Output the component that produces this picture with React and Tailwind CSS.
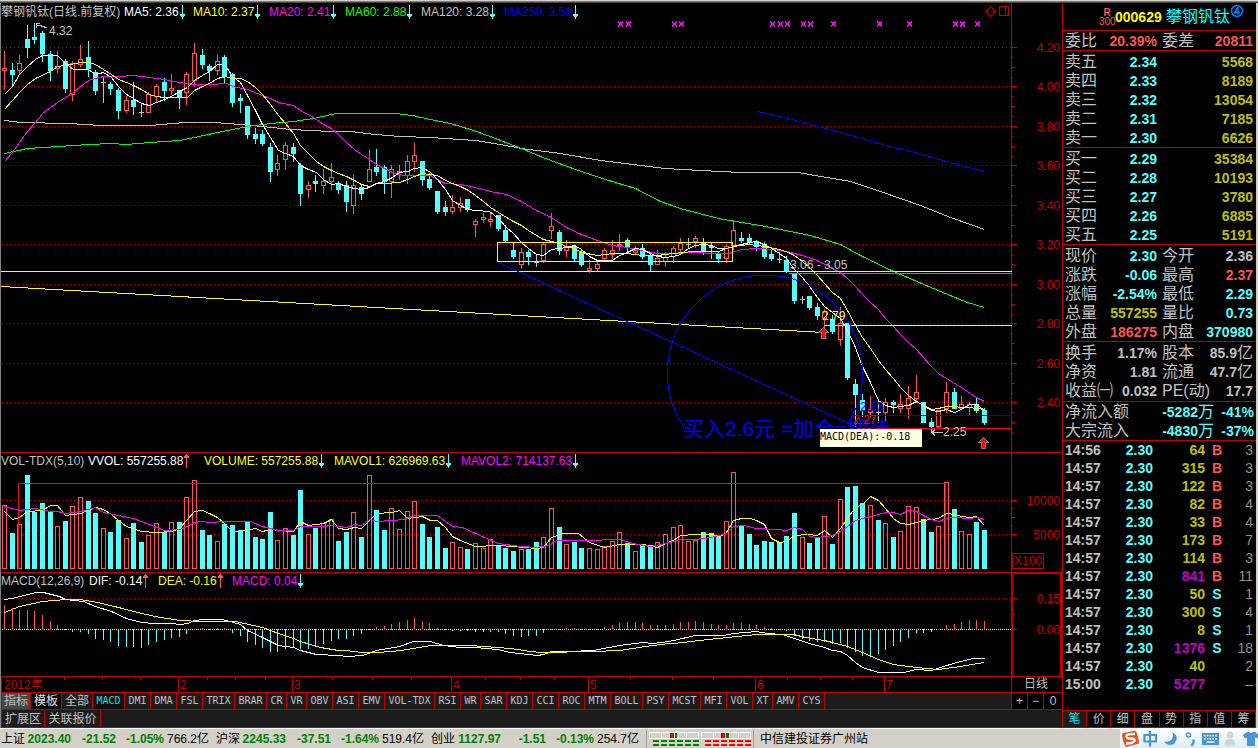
import React, { useState } from 'react'

/* daily candles, in chart units: [kind, high, bodyTop, bodyBottom, low]
   u = up, d = down, F / f = doji on rising / falling volume */
const CANDLES = [
  ['u', 51, 68, 71, 89], ['d', 63, 70, 75, 86], ['u', 55, 63, 71, 75], ['d', 25, 39, 48, 58], ['d', 23, 37, 40, 44],
  ['d', 31, 33, 54, 62], ['d', 51, 54, 71, 81], ['u', 51, 66, 69, 73], ['d', 59, 61, 89, 93], ['u', 61, 63, 95, 101],
  ['u', 45, 59, 65, 67], ['d', 41, 57, 69, 77], ['d', 70, 72, 91, 95], ['F', 77, 82, 83, 103], ['d', 82, 84, 89, 95],
  ['d', 88, 90, 111, 119], ['u', 96, 100, 111, 113], ['d', 82, 100, 107, 115], ['f', 103, 112, 113, 117], ['u', 92, 94, 113, 113],
  ['u', 84, 86, 97, 103], ['d', 78, 82, 91, 101], ['u', 74, 88, 91, 95], ['d', 90, 90, 98, 109], ['u', 72, 74, 93, 105],
  ['u', 43, 53, 81, 87], ['d', 49, 55, 65, 69], ['d', 64, 66, 71, 81], ['u', 55, 61, 71, 75], ['d', 55, 57, 77, 83],
  ['d', 73, 74, 103, 107], ['d', 94, 98, 101, 113], ['d', 106, 106, 135, 139], ['d', 128, 134, 139, 144], ['d', 130, 134, 144, 146],
  ['d', 143, 147, 172, 182], ['u', 155, 163, 170, 176], ['u', 142, 145, 160, 170], ['d', 143, 147, 154, 162], ['d', 163, 165, 194, 206],
  ['u', 181, 185, 190, 198], ['d', 175, 181, 184, 192], ['u', 169, 181, 186, 194], ['u', 163, 177, 182, 190], ['d', 181, 183, 190, 194],
  ['d', 181, 185, 202, 212], ['u', 175, 185, 206, 214], ['d', 185, 187, 194, 200], ['u', 149, 169, 182, 182], ['d', 149, 167, 172, 176],
  ['d', 165, 167, 182, 194], ['u', 165, 169, 182, 198], ['u', 165, 171, 173, 180], ['u', 155, 161, 176, 184], ['u', 143, 155, 162, 172],
  ['d', 161, 161, 180, 186], ['d', 173, 179, 188, 190], ['d', 191, 191, 212, 214], ['d', 201, 207, 212, 216], ['u', 195, 207, 212, 214],
  ['u', 197, 203, 208, 212], ['d', 199, 199, 210, 212], ['u', 219, 221, 225, 237], ['u', 213, 217, 220, 223], ['u', 213, 219, 222, 227],
  ['d', 215, 215, 229, 231], ['d', 225, 230, 241, 242], ['d', 243, 250, 257, 259], ['u', 248, 252, 265, 269], ['d', 250, 252, 257, 265],
  ['f', 254, 262, 263, 267], ['u', 243, 244, 261, 263], ['u', 213, 226, 231, 239], ['d', 230, 232, 251, 255], ['u', 240, 246, 251, 257],
  ['d', 245, 246, 259, 261], ['d', 250, 252, 265, 267], ['u', 260, 268, 271, 273], ['u', 262, 264, 269, 271], ['u', 248, 250, 259, 261],
  ['u', 240, 250, 255, 259], ['u', 234, 244, 246, 251], ['d', 238, 240, 248, 253], ['u', 246, 250, 253, 255], ['d', 244, 248, 257, 259],
  ['d', 254, 255, 265, 271], ['u', 250, 258, 265, 265], ['u', 252, 257, 262, 267], ['u', 246, 248, 257, 263], ['u', 238, 243, 250, 252],
  ['F', 238, 244, 245, 248], ['u', 236, 238, 242, 248], ['d', 238, 242, 251, 255], ['d', 243, 246, 248, 259], ['d', 251, 254, 259, 263],
  ['u', 244, 246, 259, 263], ['u', 220, 230, 246, 250], ['d', 232, 238, 241, 243], ['d', 234, 238, 243, 245], ['d', 240, 241, 247, 251],
  ['d', 242, 244, 257, 259], ['d', 250, 254, 259, 261], ['f', 252, 259, 260, 263], ['d', 256, 260, 272, 273], ['d', 274, 274, 301, 304],
  ['F', 296, 299, 300, 304], ['d', 296, 296, 308, 310], ['d', 303, 307, 316, 320], ['u', 309, 311, 319, 330], ['d', 315, 319, 332, 334],
  ['u', 307, 323, 340, 346], ['d', 323, 323, 378, 380], ['d', 379, 384, 395, 427], ['d', 394, 400, 411, 417], ['u', 396, 409, 413, 417],
  ['f', 400, 412, 413, 423], ['u', 398, 402, 413, 421], ['d', 400, 402, 405, 413], ['u', 394, 404, 409, 413], ['u', 386, 398, 409, 419],
  ['u', 375, 392, 399, 403], ['d', 402, 402, 423, 423], ['d', 418, 422, 427, 433], ['u', 410, 410, 427, 429], ['u', 382, 392, 409, 413],
  ['d', 388, 392, 409, 409], ['u', 396, 404, 409, 410], ['u', 402, 404, 408, 415], ['d', 398, 404, 411, 413], ['d', 408, 410, 423, 425],
]

/* top of each volume bar */
const VOLUME = [
  505, 533, 524, 475, 512, 503, 511, 526, 521, 506, 497, 501, 513, 528, 532, 520, 538, 523, 542, 535,
  523, 532, 522, 522, 497, 480, 530, 535, 541, 524, 525, 530, 522, 537, 539, 512, 540, 528, 535, 490,
  534, 528, 523, 519, 541, 532, 512, 537, 475, 510, 530, 508, 529, 511, 501, 524, 537, 527, 548, 542,
  547, 549, 543, 548, 539, 545, 548, 551, 549, 549, 542, 537, 508, 527, 544, 542, 548, 548, 549, 546,
  541, 532, 543, 551, 545, 545, 542, 534, 527, 525, 541, 540, 532, 533, 535, 521, 472, 526, 534, 545,
  541, 542, 542, 536, 513, 537, 543, 538, 516, 544, 499, 487, 486, 503, 505, 520, 523, 537, 531, 506,
  507, 519, 532, 526, 482, 509, 531, 534, 522, 530,
]

/* end of each MACD stick, the zero line is at 629 */
const MACD = [
  605, 608, 610, 610, 611, 615, 621, 625, 630, 632, 632, 634, 639, 640, 642, 646, 647, 647, 648, 645,
  642, 640, 638, 637, 634, 629, 628, 629, 628, 628, 633, 636, 642, 645, 648, 652, 652, 649, 648, 649,
  649, 647, 644, 641, 639, 639, 636, 634, 629, 627, 626, 624, 622, 620, 618, 621, 623, 628, 630, 631,
  631, 631, 632, 632, 632, 632, 634, 636, 637, 636, 636, 633, 629, 629, 628, 628, 629, 629, 629, 627,
  625, 623, 622, 622, 623, 625, 625, 625, 624, 622, 622, 621, 622, 624, 625, 625, 623, 623, 624, 625,
  627, 628, 629, 631, 636, 639, 641, 642, 642, 644, 643, 648, 652, 656, 656, 654, 650, 646, 642, 638,
  633, 633, 632, 629, 625, 624, 622, 620, 620, 621,
]

const PRICE_LINES = [
  { color: '#c0c0c0', points: '4,120 20,122 68,123 100,125 150,125 184,122 214,122 240,124 262,126 290,129 331,131 350,131 375,134 400,136 430,137 475,140 500,144 521,148 560,153 600,160 640,165 665,168 700,170 740,172 798,172 820,176 850,181 880,191 920,205 950,217 984,229' },
  { color: '#0000ff', points: '757,111 780,116 810,124 840,132 862,138 885,145 915,152 957,164 984,171' },
  { color: '#00ff00', points: '4,153 27,148 58,146 88,144 111,143 126,144 149,142 179,140 194,137 217,132 247,126 270,123 293,121 313,118 331,114 337,113 395,113 412,115 430,119 450,123 470,129 490,136 513,145 521,148 545,158 575,169 605,179 635,188 660,201 680,208 718,218 735,221 760,225 785,230 810,235 840,244 860,255 893,271 940,291 967,302 984,307' },
  { color: '#ff00ff', points: '4,161 12,152 19,142 27,131 35,122 42,113 50,107 57,102 65,97 73,92 80,86 88,80 95,78 103,76 118,76 133,75 149,77 164,79 179,82 194,84 209,84 227,83 232,86 247,89 262,95 270,98 278,102 293,105 300,110 313,117 323,124 331,128 338,134 346,142 354,149 361,154 369,159 376,164 384,168 392,172 403,175 430,175 437,179 445,183 460,184 475,187 490,191 506,194 521,201 536,210 551,217 566,227 581,234 597,240 612,245 627,247 642,250 657,253 670,253 693,252 718,253 728,253 741,249 757,248 773,249 786,251 802,255 817,260 832,268 840,272 847,278 855,286 862,294 870,302 878,309 885,318 893,326 900,334 908,342 916,349 923,357 931,366 938,373 946,378 961,387 976,397 984,401' },
  { color: '#ffff00', points: '4,109 12,100 19,92 27,84 35,78 50,71 57,66 65,65 80,62 88,62 95,64 103,69 111,74 118,79 126,82 133,85 141,89 149,94 156,96 164,97 179,97 187,97 194,90 202,86 209,83 217,78 225,76 232,78 240,78 247,81 255,87 262,94 270,104 278,115 285,123 293,133 300,145 308,153 316,161 323,166 331,170 338,173 346,176 354,180 361,184 369,186 376,183 384,183 399,182 407,179 414,176 422,173 437,175 445,180 452,183 460,186 468,190 475,195 483,201 490,207 498,212 506,217 513,221 521,225 528,230 536,235 543,239 551,241 559,243 566,246 574,248 581,252 597,255 612,253 627,253 642,255 657,255 673,253 693,251 718,251 726,248 733,246 749,244 764,246 779,249 788,252 794,255 802,261 809,267 817,275 824,283 832,292 840,298 847,310 855,325 862,337 870,348 878,360 885,369 893,378 900,387 908,395 916,401 923,405 931,409 938,408 946,406 969,407 984,409' },
  { color: '#ffffff', points: '4,94 12,86 19,74 27,66 35,59 42,55 57,55 65,63 73,69 88,69 95,74 103,72 111,77 118,86 126,94 133,98 141,103 149,105 156,102 164,99 171,96 179,91 187,87 194,80 202,75 209,71 217,64 225,65 232,76 240,82 247,95 255,110 262,124 270,137 278,150 285,153 293,156 300,165 308,169 316,172 323,179 331,184 338,183 346,186 354,188 361,189 369,187 376,183 384,181 392,177 399,172 407,171 414,168 422,167 430,172 437,179 445,189 452,200 460,205 468,209 475,210 489,211 498,218 506,227 513,233 521,242 528,248 536,254 543,255 551,249 566,247 574,245 581,249 589,256 597,260 612,260 619,255 627,252 635,248 642,249 650,253 657,256 665,257 673,256 680,254 688,248 695,245 703,244 711,245 718,248 726,248 733,246 741,244 749,242 756,241 764,244 771,248 779,253 786,258 794,269 802,277 809,286 817,297 824,306 832,312 840,318 847,330 855,347 862,366 870,382 878,400 885,405 893,407 900,406 908,405 916,401 923,405 931,410 938,411 946,409 954,412 961,409 969,404 976,404 984,410' },
]

const VOLUME_LINES = [
  { color: '#ffff00', points: '4,511 12,519 19,517 27,511 42,510 50,505 57,505 65,515 80,513 95,507 103,509 111,514 118,520 126,526 141,531 156,532 171,531 179,528 187,519 194,511 202,510 209,513 217,517 225,524 232,531 240,531 255,528 262,531 270,529 278,530 293,531 300,521 308,525 323,523 331,519 338,528 346,529 354,527 361,528 369,520 376,513 392,512 399,510 407,518 422,516 430,520 437,520 445,527 452,536 460,540 475,546 497,545 513,546 536,548 543,547 551,537 563,533 578,533 589,542 604,547 619,544 643,544 657,547 665,543 673,540 680,535 695,534 711,534 720,536 726,532 733,520 741,518 750,518 756,520 764,524 771,538 779,542 786,541 794,535 807,534 817,535 824,530 832,537 840,528 847,518 855,507 862,504 870,496 878,500 885,508 893,518 900,523 908,524 916,522 923,520 938,518 946,513 954,514 961,516 969,517 976,516 984,525' },
  { color: '#ff00ff', points: '4,506 19,510 27,509 35,508 50,511 57,511 65,513 80,511 95,507 103,512 118,515 133,518 149,524 164,530 179,529 187,526 194,522 202,521 209,522 225,521 250,521 262,526 278,530 293,530 300,526 323,526 331,525 346,527 354,524 361,525 369,519 376,521 392,520 403,519 414,515 437,515 445,521 452,526 462,527 475,533 498,543 520,546 536,547 548,545 556,540 584,540 620,539 632,543 650,546 665,543 680,539 695,539 711,537 726,533 733,526 743,525 756,528 776,529 786,530 794,527 802,529 809,536 817,537 832,535 840,531 847,526 855,520 862,518 870,516 885,512 893,512 900,514 908,510 916,511 923,515 931,519 938,521 946,518 954,517 969,518 976,517 984,519' },
]

const MACD_LINES = [
  { color: '#ffffff', points: '4,599 12,598 35,592 43,592 59,596 65,599 83,601 95,606 111,611 126,618 141,622 153,623 170,623 180,624 187,623 194,620 203,619 222,619 233,622 240,624 247,630 262,637 278,645 293,647 300,650 316,654 338,655 347,656 362,655 376,650 399,646 413,641 430,641 443,645 460,647 475,647 497,649 510,652 537,655 543,654 551,651 568,651 593,650 619,645 642,642 653,643 668,641 673,640 695,635 723,635 733,633 756,631 767,633 782,634 794,638 809,643 824,647 832,650 840,651 847,655 855,662 862,667 878,672 903,672 916,669 931,670 943,666 960,661 973,658 984,658' },
  { color: '#ffff00', points: '4,612 19,606 42,601 65,599 80,599 97,602 118,607 141,613 160,617 180,620 200,621 235,621 262,627 278,633 293,638 300,641 320,647 338,650 346,650 361,652 376,652 392,651 407,649 430,645 470,645 497,647 510,648 530,651 540,652 593,651 619,650 645,646 668,643 673,643 708,639 727,637 756,634 793,634 805,637 824,640 832,642 847,646 862,652 878,659 893,664 916,667 938,669 960,666 984,662' },
]

const PRICE_AXIS = [
  ['4.20', 47], ['4.00', 86], ['3.80', 126], ['3.60', 165], ['3.40', 205],
  ['3.20', 244], ['3.00', 284], ['2.80', 323], ['2.60', 363], ['2.40', 402],
]

const MARKS = [
  [620, 1], [628, 1], [674, 0], [681, 0], [772, 0], [780, 0], [787, 0], [803, 0],
  [810, 0], [833, 1], [879, 1], [909, 1], [955, 1], [962, 1], [977, 0],
]

const MONTHS = [['2', 178], ['3', 292], ['4', 451], ['5', 588], ['6', 755], ['7', 884]]
const WEEKS = [64, 102, 140, 207, 235, 265, 332, 372, 411, 485, 520, 554, 630, 672, 713, 787, 820, 852]

const INDICATORS = [
  'MACD', 'DMI', 'DMA', 'FSL', 'TRIX', 'BRAR', 'CR', 'VR', 'OBV', 'ASI', 'EMV', 'VOL-TDX', 'RSI', 'WR', 'SAR',
  'KDJ', 'CCI', 'ROC', 'MTM', 'BOLL', 'PSY', 'MCST', 'MFI', 'VOL', 'XT', 'AMV', 'CYS',
]
const TAB_WIDTH = { 2: 'w-5', 3: 'w-[26px]', 4: 'w-8', 7: 'w-[50px]' }

const ASKS = [['卖五', '2.34', '5568'], ['卖四', '2.33', '8189'], ['卖三', '2.32', '13054'], ['卖二', '2.31', '7185'], ['卖一', '2.30', '6626']]
const BIDS = [['买一', '2.29', '35384'], ['买二', '2.28', '10193'], ['买三', '2.27', '3780'], ['买四', '2.26', '6885'], ['买五', '2.25', '5191']]

const CYAN = 'text-[#54ffff]'
const RED = 'text-[#ff5454]'
const GREY = 'text-[#c0c0c0]'
const OLIVE = 'text-[#c0c000]'

/* label, value, value color, label, value, value color */
const QUOTE = [
  ['现价', '2.30', CYAN, '今开', '2.36', GREY],
  ['涨跌', '-0.06', CYAN, '最高', '2.37', RED],
  ['涨幅', '-2.54%', CYAN, '最低', '2.29', CYAN],
  ['总量', '557255', OLIVE, '量比', '0.73', CYAN],
  ['外盘', '186275', RED, '内盘', '370980', CYAN],
]
const FUNDAMENTALS = [
  ['换手', '1.17%', GREY, '股本', '85.9亿', GREY],
  ['净资', '1.81', GREY, '流通', '47.7亿', GREY],
  ['收益㈠', '0.032', GREY, 'PE(动)', '17.7', GREY],
]
const FLOWS = [['净流入额', '-5282万', '-41%'], ['大宗流入', '-4830万', '-37%']]

const TICKS = [
  ['14:56', '64', 'B', '3'], ['14:57', '315', 'B', '3'], ['14:57', '122', 'B', '3'], ['14:57', '82', 'B', '4'],
  ['14:57', '33', 'B', '4'], ['14:57', '173', 'B', '7'], ['14:57', '114', 'B', '3'], ['14:57', '841', 'B', '11'],
  ['14:57', '50', 'S', '1'], ['14:57', '300', 'S', '4'], ['14:57', '8', 'S', '1'], ['14:57', '1376', 'S', '18'],
  ['14:57', '40', '', '2'], ['15:00', '5277', '', '–'],
]

const INDEXES = [
  ['上证', '2023.40', '-21.52', '-1.05%', '766.2亿'],
  ['沪深', '2245.33', '-37.51', '-1.64%', '519.4亿'],
  ['创业', '1127.97', '-1.51', '-0.13%', '254.7亿'],
]

const candleX = (i) => Math.round(4 + i * 7.597)

function Trend({ up }) {
  return (
    <svg width="7" height="14" viewBox="0 0 7 14" className="shrink-0" shapeRendering="crispEdges">
      {up
        ? <path d="M3 0h1v1h1v1h1v2H4v10H3V4H1V2h1V1h1z" fill="#ff5454" />
        : <path d="M3 0h1v9h2v2H5v1H4v2H3v-2H2v-1H1V9h2z" fill="#54ffff" />}
    </svg>
  )
}

function PanelHeader({ items }) {
  return (
    <div className="absolute left-0 top-0 flex h-[17px] items-center whitespace-nowrap text-xs leading-4">
      {items.map(([text, style, dir]) => (
        <div key={text} className={`flex shrink-0 items-center ${style}`}>
          <span>{text}</span>
          {dir && <Trend up={dir === 'up'} />}
        </div>
      ))}
    </div>
  )
}

function Lines({ lines }) {
  return (
    <g fill="none" transform="translate(.5 .5)">
      {lines.map(l => <polyline key={l.color} points={l.points} stroke={l.color} />)}
    </g>
  )
}

function GridLine({ y }) {
  return <line x1="2" x2="1011" y1={y + 0.5} y2={y + 0.5} stroke="#c00000" strokeDasharray="1 3" />
}

function AxisText({ y, children }) {
  return <text x="1060" y={y + 5} textAnchor="end" fontSize="12" fill="#c00000">{children}</text>
}

function Candle({ i, data }) {
  const [kind, hi, top, bot, lo] = data
  const x = candleX(i)
  if (kind === 'f' || kind === 'F') {
    return (
      <g fill="#c0c0c0">
        <rect x={x} y={hi} width="1" height={lo - hi} />
        <rect x={x - 2} y={top} width="5" height="1" />
      </g>
    )
  }
  if (kind === 'd') {
    return (
      <g fill="#54ffff">
        <rect x={x} y={hi} width="1" height={lo - hi} />
        <rect x={x - 2} y={top} width="5" height={bot - top} />
      </g>
    )
  }
  return (
    <g fill="#ff5454">
      <rect x={x} y={hi} width="1" height={top - hi} />
      <rect x={x} y={bot} width="1" height={lo - bot} />
      <rect x={x - 1.5} y={top + 0.5} width="4" height={bot - top - 1} fill="none" stroke="#ff5454" />
    </g>
  )
}

function BuyArrow({ x, y }) {
  return <path transform={`translate(${x} ${y})`} d="M.5 -5.5L5.5 -.5H2.500V5.500H-1.500V-.5H-4.500Z" fill="#ff0000" stroke="#808080" />
}

function PriceChart() {
  return (
    <div className="relative">
      <svg viewBox="1 3 1061 449" className="block h-auto w-full" shapeRendering="crispEdges">
        {PRICE_AXIS.map(([label, y]) => (
          <g key={label}>
            <GridLine y={y} />
            <path d={`M1011 ${y + 0.5}h6M1011 ${y + 10.5}h2M1011 ${y + 20.5}h4M1011 ${y + 30.5}h2`} stroke="#c00000" />
            <AxisText y={y}>{label}</AxisText>
          </g>
        ))}
        <path d="M1011.5 3V452" stroke="#c00000" />

        {CANDLES.map((c, i) => <Candle key={i} i={i} data={c} />)}
        <Lines lines={PRICE_LINES} />

        {/* hand-drawn lines and notes */}
        <g fill="none" transform="translate(.5 .5)">
          <rect x="497" y="242" width="235" height="19" stroke="#ffff00" />
          <path d="M0 271H1011M0 286L823 332M823 325H1011" stroke="#ffff00" />
          <path d="M788 273H1011" stroke="#808080" />
          <path d="M498 262L853 425M858 415H1011" stroke="#0000ff" />
          <path d="M686 430A97.5 97.5 0 1 1 847 424" stroke="#0000ff" />
          <path d="M853 428H1011" stroke="#ff0000" />
        </g>
        <text x="683" y="436" fontSize="21" fill="#0000ff" xmlSpace="preserve">买入2.6元 =加仓=期待</text>
        <g fontSize="12">
          <text x="49" y="35" fill="#c0c0c0">4.32</text>
          <text x="790" y="269" fill="#c0c0c0">3.06 - 3.05</text>
          <text x="822" y="320" fill="#ffff00">2.79</text>
          <text x="860" y="411" fill="#0000ff">2.33</text>
          <text x="853" y="424" fill="#ff0000">2.27</text>
          <text x="943" y="436" fill="#c0c0c0">2.25</text>
        </g>
        <path d="M47 27.5h-3v-1h-3v-1h-4M36.5 28v-5h3M943 432.5h-11M935 429.5l-3 3 3 3" fill="none" stroke="#c0c0c0" />
        <BuyArrow x={823} y={333} />
        <BuyArrow x={983} y={443} />

        {MARKS.map(([x, bold]) => (
          <g key={x} stroke="#ff00ff">
            <path d={`M${x - 2} 21.5l5 5M${x + 3} 21.5l-5 5`} />
            {bold === 1 && <rect x={x - 1} y="22" width="3" height="3" fill="#ff00ff" stroke="none" />}
          </g>
        ))}
        <path d="M990.5 6.5l4.500 5-4.500 5-4.500-5zM999.500 6.500h9v9h-9zM1005.500 6.500v9" fill="none" stroke="#c00000" />
      </svg>
      <PanelHeader
        items={[
          ['攀钢钒钛(日线.前复权)', 'w-[123px] text-[#c0c0c0]'],
          ['MA5: 2.36', 'w-[69px] text-white', 'down'],
          ['MA10: 2.37', 'w-[76px] text-[#ffff00]', 'down'],
          ['MA20: 2.41', 'w-[76px] text-[#ff00ff]', 'down'],
          ['MA60: 2.88', 'w-[76px] text-[#00ff00]', 'down'],
          ['MA120: 3.28', 'w-[83px] text-[#c0c0c0]', 'down'],
          ['MA250: 3.58', 'w-[83px] text-[#0000ff]', 'down'],
        ]}
      />
      <div className="absolute bottom-[5px] left-[819px] h-[18px] w-[102px] bg-[#ffffe1] font-['DejaVu_Sans_Mono',monospace] text-[10px] leading-4 text-black">
        MACD(DEA):-0.18
      </div>
    </div>
  )
}

function VolumeChart() {
  return (
    <div className="relative">
      <svg viewBox="1 452 1061 120" className="block h-auto w-full" shapeRendering="crispEdges">
        <GridLine y={500} />
        <GridLine y={534} />
        <path d="M1 452.500H1062M1011.500 452V572M1011 500.500h6M1011 508.500h2M1011 517.500h4M1011 525.500h2M1011 534.500h6" stroke="#c00000" />
        <AxisText y={500}>10000</AxisText>
        <AxisText y={534}>5000</AxisText>
        <rect x="1012.500" y="553.500" width="31" height="15" fill="none" stroke="#c00000" />
        <text x="1014" y="565" fontSize="12" fill="#c00000">X100</text>
        {VOLUME.map((top, i) => {
          const rising = CANDLES[i][0] === 'u' || CANDLES[i][0] === 'F'
          return rising
            ? <rect key={i} x={candleX(i) - 1.5} y={top + 0.5} width="4" height={568 - top} fill="none" stroke="#ff5454" />
            : <rect key={i} x={candleX(i) - 2} y={top} width="5" height={569 - top} fill="#54ffff" />
        })}
        <path d="M18.500 569V483.500H945.500V571" fill="none" stroke="#ff0000" />
        <Lines lines={VOLUME_LINES} />
      </svg>
      <PanelHeader
        items={[
          ['VOL-TDX(5,10)', 'w-[87px] text-[#c0c0c0]'],
          ['VVOL: 557255.88', 'w-[116px] text-white', 'up'],
          ['VOLUME: 557255.88', 'w-[130px] text-[#ffff00]', 'down'],
          ['MAVOL1: 626969.63', 'w-[127px] text-[#ffff00]', 'down'],
          ['MAVOL2: 714137.63', 'w-[127px] text-[#ff00ff]', 'down'],
        ]}
      />
    </div>
  )
}

function MacdChart() {
  return (
    <div className="relative">
      <svg viewBox="1 572 1061 104" className="block h-auto w-full" shapeRendering="crispEdges">
        <GridLine y={598} />
        <path d="M1 572.500H1062" stroke="#c00000" />
        <path d="M1012 676V573H1061V676" fill="none" stroke="#c00000" strokeWidth="2" />
        <path d="M1013 598.500h4M1013 614.500h2M1013 629.500h4" stroke="#c00000" />
        <AxisText y={598}>0.15</AxisText>
        <AxisText y={629}>0.00</AxisText>
        <path d="M2 629.500H1011" stroke="#ffffff" strokeDasharray="1 1" />
        {MACD.map((y, i) => (
          <rect
            key={i}
            x={candleX(i)}
            y={Math.min(y, 629)}
            width="1"
            height={Math.abs(y - 629) + (y <= 629 ? 1 : 0)}
            fill={y <= 629 ? '#ff5454' : '#54ffff'}
          />
        ))}
        <Lines lines={MACD_LINES} />
      </svg>
      <PanelHeader
        items={[
          ['MACD(12,26,9)', 'w-[88px] text-[#c0c0c0]'],
          ['DIF: -0.14', 'w-[69px] text-white', 'up'],
          ['DEA: -0.16', 'w-[74px] text-[#ffff00]', 'up'],
          ['MACD: 0.04', 'w-[76px] text-[#ff00ff]', 'down'],
        ]}
      />
    </div>
  )
}

function DateAxis() {
  return (
    <svg viewBox="1 676 1061 16" className="block h-auto w-full" shapeRendering="crispEdges">
      <path d="M1 676.500H1062M1011.500 676V692M1.500 676V692" stroke="#c00000" />
      {WEEKS.map(x => <rect key={x} x={x} y="677" width="1" height="3" fill="#c00000" />)}
      <text x="4" y="689" fontSize="12" fill="#c00000">2012年</text>
      {MONTHS.map(([m, x]) => (
        <g key={m} fill="#c00000">
          <rect x={x} y="676" width="1" height="16" />
          <text x={x + 2} y="689" fontSize="12">{m}</text>
        </g>
      ))}
      <text x="1024" y="688" fontSize="12" fill="#c0c0c0">日线</text>
    </svg>
  )
}

function IndicatorTabs() {
  const [active, setActive] = useState('MACD')
  return (
    <div>
      <div className="flex h-[17px] border-t border-[#c00000] bg-[#1c1c1c] text-xs leading-4 text-[#c0c0c0]">
        <button className="w-[30px] shrink-0 border-x border-[#c00000] bg-[#484848]">指标</button>
        <button className="w-[31px] shrink-0 border-r border-[#c00000] bg-black text-[#e0e0e0]">模板</button>
        <button className="w-[31px] shrink-0 border-r border-[#c00000]">全部</button>
        <div className="flex min-w-0 flex-1 overflow-hidden font-['DejaVu_Sans_Mono',monospace] text-[10px]">
          {INDICATORS.map(name => (
            <button
              key={name}
              onClick={() => setActive(name)}
              className={`shrink-0 border-r border-[#c00000] ${TAB_WIDTH[name.length]} ${active === name ? 'bg-[#101010] text-[#00e0e0]' : ''}`}
            >
              {name}
            </button>
          ))}
        </div>
        <button className="w-4 shrink-0 border-l border-[#c00000] bg-black">+</button>
        <button className="w-4 shrink-0 border-l border-[#c00000] bg-black">−</button>
        <button className="w-[19px] shrink-0 border-l border-[#c00000] bg-black">0</button>
      </div>
      <div className="flex h-[19px] border-y border-[#c00000] bg-[#1c1c1c] text-xs leading-4 text-[#c0c0c0]">
        <button className="w-11 border-x border-[#c00000]">扩展区</button>
        <button className="w-14 border-r border-[#c00000]">关联报价</button>
      </div>
    </div>
  )
}

/* the unit after a bold number keeps the normal weight */
function Num({ children }) {
  const unit = /[亿万]$/.test(children) ? children.slice(-1) : ''
  return (
    <>
      <b>{unit ? children.slice(0, -1) : children}</b>
      {unit && <span className="text-base leading-[18px]">{unit}</span>}
    </>
  )
}

function DepthTable({ rows }) {
  return (
    <table className="w-full table-fixed text-sm leading-[18px]">
      <tbody>
        {rows.map(([label, price, vol]) => (
          <tr key={label} className="h-[19px]">
            <th className="w-12 p-0 pl-0.5 text-left text-base leading-[18px] font-normal">{label}</th>
            <td className={`w-[46px] p-0 text-right font-bold ${CYAN}`}>{price}</td>
            <td className={`p-0 pr-[3px] text-right font-bold ${OLIVE}`}>{vol}</td>
          </tr>
        ))}
      </tbody>
    </table>
  )
}

function QuoteTable({ rows }) {
  return (
    <table className="w-full table-fixed text-sm leading-[18px] whitespace-nowrap">
      <tbody>
        {rows.map(([l1, v1, c1, l2, v2, c2]) => (
          <tr key={l1} className="h-[19px]">
            <th className="w-10 p-0 pl-0.5 text-left text-base leading-[18px] font-normal">{l1}</th>
            <td className={`w-[54px] p-0 text-right ${c1}`}><Num>{v1}</Num></td>
            <th className="w-10 p-0 pl-[5px] text-left text-base leading-[18px] font-normal">{l2}</th>
            <td className={`p-0 pr-[3px] text-right ${c2}`}><Num>{v2}</Num></td>
          </tr>
        ))}
      </tbody>
    </table>
  )
}

function QuotePanel() {
  const [tab, setTab] = useState('笔')
  return (
    <aside className="flex w-[196px] shrink-0 flex-col border-r-2 border-l border-r-[#d4d0c8] border-l-[#c00000] text-[#c0c0c0]">
      <div className="flex h-7 items-center border-b border-[#c00000] pl-9">
        <div className="w-4 text-center text-[10px] leading-[9px] text-[#ff5454]">
          <div className="font-bold">R</div>
          <div>300</div>
        </div>
        <b className="w-[51px] text-sm text-[#ffff00]">000629</b>
        <span className="text-base leading-5 text-[#00ffff]">攀钢钒钛</span>
        <svg width="14" height="14" viewBox="0 0 14 14" className="mb-3">
          <circle cx="7" cy="7" r="5.500" fill="none" stroke="#0080ff" strokeWidth="1.500" />
          <path d="M8 10.500V3.500L4.500 8.500H10" fill="none" stroke="#0080ff" strokeWidth="1.500" />
        </svg>
      </div>
      <div className="h-5 border-b border-[#c00000]">
        <QuoteTable rows={[['委比', '20.39%', RED, '委差', '20811', RED]]} />
      </div>
      <div className="border-b border-[#c00000] pt-px"><DepthTable rows={ASKS} /></div>
      <div className="border-b border-[#c00000] pt-px"><DepthTable rows={BIDS} /></div>
      <div className="border-b border-[#c00000] pt-px"><QuoteTable rows={QUOTE} /></div>
      <div className="border-b border-[#c00000] py-px"><QuoteTable rows={FUNDAMENTALS} /></div>
      <table className="w-full table-fixed text-sm leading-[18px] whitespace-nowrap">
        <tbody>
          {FLOWS.map(([label, amount, pct]) => (
            <tr key={label} className="h-[19px]">
              <th className="w-[72px] p-0 pl-0.5 text-left text-base leading-[18px] font-normal">{label}</th>
              <td className={`p-0 text-right ${CYAN}`}><Num>{amount}</Num></td>
              <td className={`w-[42px] p-0 pr-0.5 text-right ${CYAN}`}><Num>{pct}</Num></td>
            </tr>
          ))}
        </tbody>
      </table>
      <div className="border-t border-[#c00000]">
        <table className="w-full table-fixed text-sm leading-[18px] font-bold">
          <tbody>
            {TICKS.map(([time, vol, side, count], i) => (
              <tr key={i} className="h-[18px]">
                <td className="w-[42px] p-0 pl-0.5">{time}</td>
                <td className={`w-12 p-0 text-right ${CYAN}`}>2.30</td>
                <td className={`w-[52px] p-0 text-right ${Number(vol) > 500 ? 'text-[#c000c0]' : OLIVE}`}>{vol}</td>
                <td className={`w-6 p-0 text-center ${side === 'B' ? RED : CYAN}`}>{side}</td>
                <td className="p-0 pr-[3px] text-right font-normal text-[#909090]">{count}</td>
              </tr>
            ))}
          </tbody>
        </table>
      </div>
      <div className="mt-auto flex h-[18px] border-y border-[#c00000] text-xs leading-4">
        {['笔', '价', '细', '盘', '势', '指', '值', '筹'].map(t => (
          <button
            key={t}
            onClick={() => setTab(t)}
            className={`flex-1 border-r border-[#c00000] ${tab === t ? 'bg-[#1c1c1c] text-[#00e0e0]' : ''}`}
          >
            {t}
          </button>
        ))}
      </div>
    </aside>
  )
}

function Meter({ color, red, green, marks }) {
  return (
    <svg width="50" height="14" viewBox="0 0 50 14" shapeRendering="crispEdges">
      <path d="M.5 .5h49v6h-49zM12.500 0v6M25.500 0v6M37.500 0v6" fill="none" stroke="#ffffff" />
      <rect x={marks - 1} y="1" width="1" height="5" fill="#800000" />
      <rect x={marks} y="1" width={red} height="5" fill="#ff0000" />
      <rect x={marks + red + 1} y="1" width={green} height="5" fill="#008000" />
      <path d="M4 9h46M4 13h46" stroke={color} strokeWidth="2" strokeDasharray="6 2" />
    </svg>
  )
}

function ImeBar() {
  return (
    <div className="ml-auto flex h-full w-[138px] shrink-0 items-center bg-linear-to-b from-white to-[#dcecfb]">
      <svg width="138" height="19" viewBox="0 0 138 19">
        <path d="M2 4.500L15 1.500Q18 4 19 14.500L6 18Q2.500 13 2 4.500Z" fill="#e8501c" />
        <path d="M15 5Q6 4.500 6.500 7.800Q7 9.500 11 9.500Q15.500 9.800 14.500 12Q12 15 6 14.500" fill="none" stroke="#ffffff" strokeWidth="2.400" />
        <path d="M24.500 6h11.500v6.500H24.500zM30 2v15.500" fill="none" stroke="#4a94d8" strokeWidth="2.200" />
        <path d="M52.500 3Q60 8 54.500 14.500Q48.500 18.500 44 12.500Q55 14 52.500 3Z" fill="#4a94d8" />
        <circle cx="68.500" cy="6" r="2" fill="none" stroke="#4a94d8" strokeWidth="1.400" />
        <path d="M73.500 10.500v3l-2 3.500" fill="none" stroke="#4a94d8" strokeWidth="2.400" />
        <rect x="82" y="4" width="17" height="12" fill="#4a94d8" />
        <path d="M84 6.800h13M84 9.800h13" stroke="#ffffff" strokeWidth="1.400" strokeDasharray="1.600 1.200" />
        <path d="M86.500 13h8" stroke="#ffffff" strokeWidth="1.400" />
        <circle cx="110" cy="6" r="3.500" fill="#d0d2d6" />
        <path d="M105 16.500v-3q0-3.500 5-3.500t5 3.500v3z" fill="#d0d2d6" />
        <path d="M127 3h2.500q1.500 2 3 0H135l4 3-2 3.500-2-1V17h-8V8.500l-2 1L123 6z" fill="#4a94d8" />
      </svg>
    </div>
  )
}

function StatusBar() {
  return (
    <footer className="flex h-5 items-center border-t border-white bg-[#d4d0c8] text-xs leading-[18px] whitespace-nowrap text-black">
      {INDEXES.map(([name, value, change, pct, amount]) => (
        <div key={name} className="flex w-[215px] shrink-0 pl-px">
          <span className="w-6">{name}</span>
          <b className="w-[46px] text-right text-[#008000]">{value}</b>
          <b className="w-[45px] text-right text-[#008000]">{change}</b>
          <b className="w-12 text-right text-[#008000]">{pct}</b>
          <span className="w-[45px] text-right">{amount}</span>
        </div>
      ))}
      <div className="ml-px flex h-[18px] items-center gap-0.5 border-x border-[#a0a0a0] px-0.5">
        <Meter color="#008000" marks={22} red={3} green={2} />
        <Meter color="#ff0000" marks={21} red={3} green={3} />
      </div>
      <span className="pl-1.5">中信建投证券广州站</span>
      <ImeBar />
    </footer>
  )
}

export default function App() {
  return (
    <div className="bg-black font-['Liberation_Sans','Noto_Sans_CJK_SC',sans-serif]">
      <div className="h-[3px] border-t border-b border-t-[#d4d0c8] border-b-[#404040] bg-[#808080]" />
      <div className="flex">
        <main className="min-w-0 flex-1 border-l border-[#808080]">
          <PriceChart />
          <VolumeChart />
          <MacdChart />
          <DateAxis />
          <IndicatorTabs />
        </main>
        <QuotePanel />
      </div>
      <StatusBar />
    </div>
  )
}
